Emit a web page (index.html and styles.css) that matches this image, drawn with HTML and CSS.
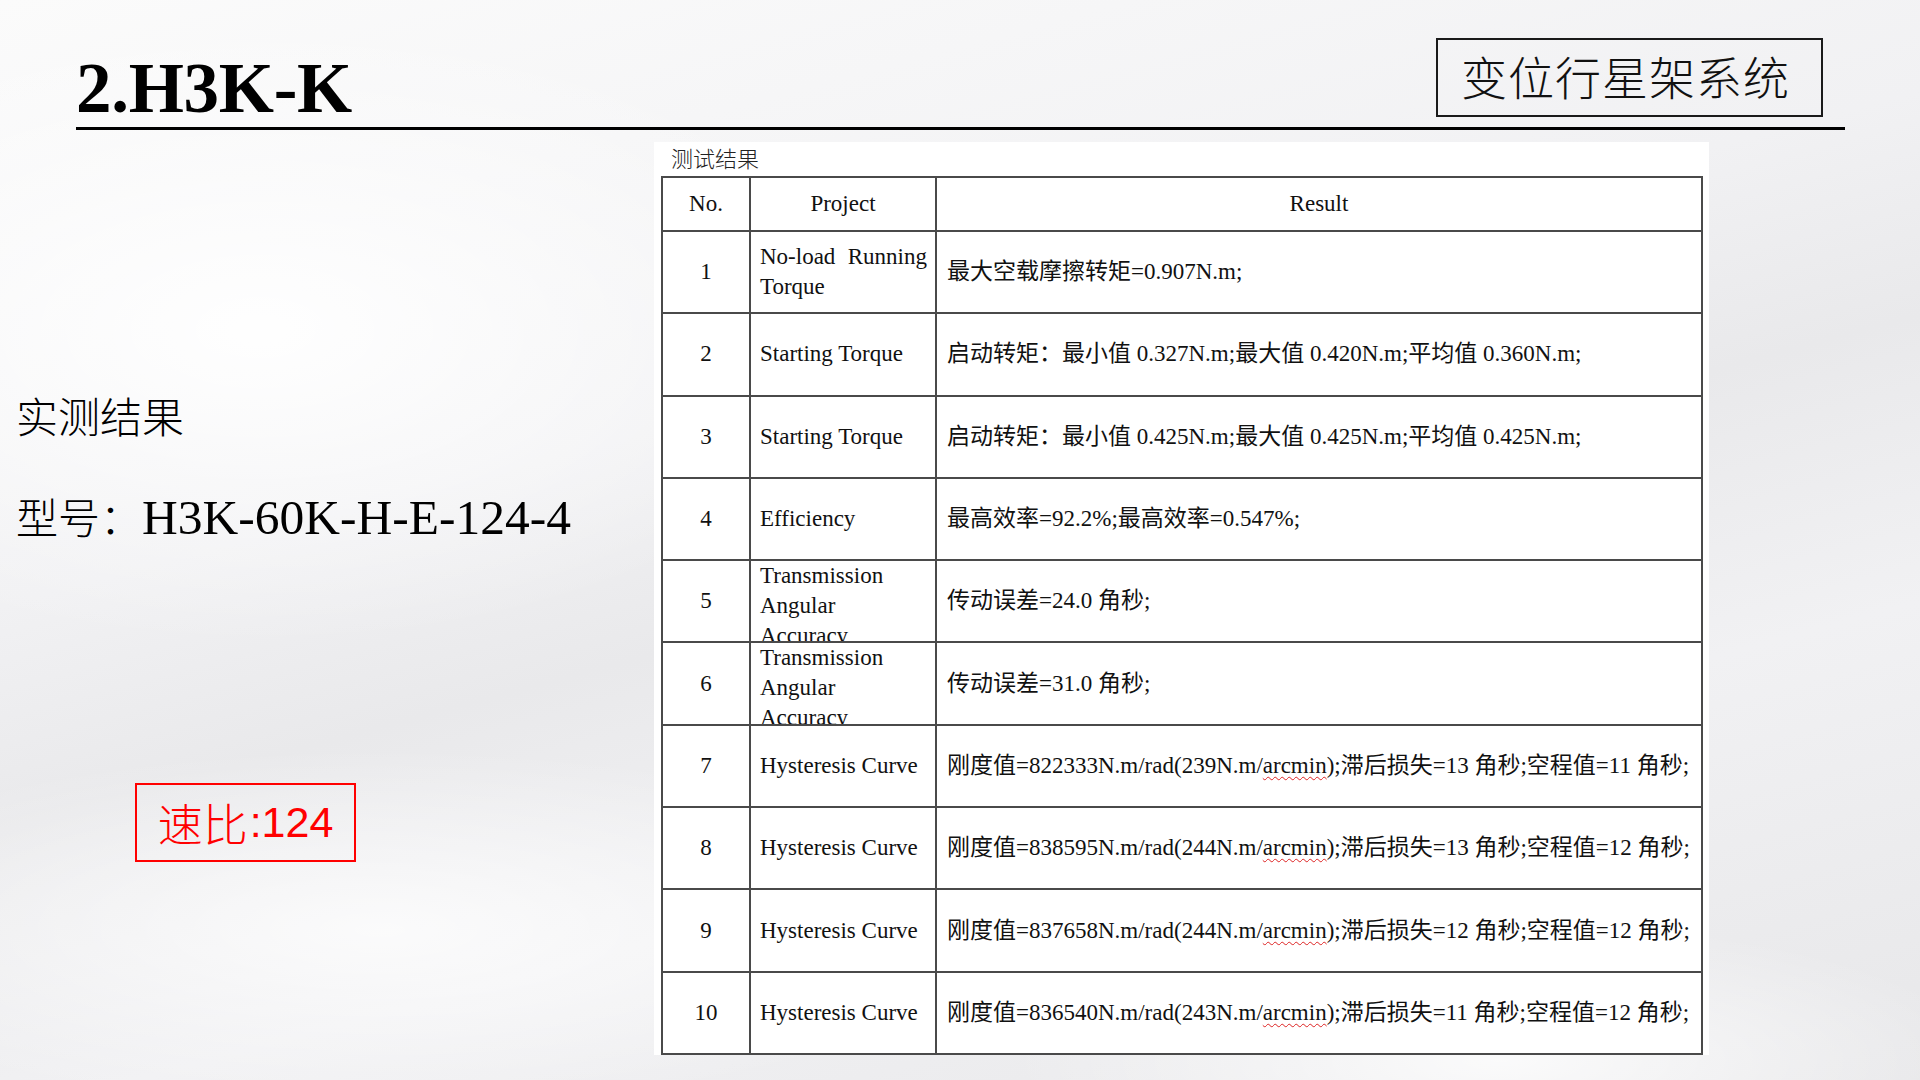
FILE: index.html
```html
<!DOCTYPE html>
<html lang="zh-CN">
<head>
<meta charset="utf-8">
<title>2.H3K-K</title>
<link rel="stylesheet" href="styles.css">
</head>
<body>
<div class="slide">
  <header class="head">
    <h1 class="title">2.H3K-K</h1>
    <div class="tag">变位行星架系统</div>
  </header>
  <main class="main">
    <section class="side">
      <div class="side-title">实测结果</div>
      <div class="model">型号：<span class="model-code">H3K-60K-H-E-124-4</span></div>
      <div class="ratio">速比<span class="ratio-num">:124</span></div>
    </section>
    <section class="panel">
      <div class="caption">测试结果</div>
      <div class="grid">
        <div class="cell head-cell">No.</div>
        <div class="cell head-cell">Project</div>
        <div class="cell head-cell">Result</div>

        <div class="cell num">1</div>
        <div class="cell proj">No-load Running Torque</div>
        <div class="cell res">最大空载摩擦转矩=0.907N.m;</div>

        <div class="cell num">2</div>
        <div class="cell proj">Starting Torque</div>
        <div class="cell res">启动转矩：最小值 0.327N.m;最大值 0.420N.m;平均值 0.360N.m;</div>

        <div class="cell num">3</div>
        <div class="cell proj">Starting Torque</div>
        <div class="cell res">启动转矩：最小值 0.425N.m;最大值 0.425N.m;平均值 0.425N.m;</div>

        <div class="cell num">4</div>
        <div class="cell proj">Efficiency</div>
        <div class="cell res">最高效率=92.2%;最高效率=0.547%;</div>

        <div class="cell num">5</div>
        <div class="cell proj proj-top">Transmission Angular Accuracy</div>
        <div class="cell res">传动误差=24.0 角秒;</div>

        <div class="cell num">6</div>
        <div class="cell proj proj-top">Transmission Angular Accuracy</div>
        <div class="cell res">传动误差=31.0 角秒;</div>

        <div class="cell num">7</div>
        <div class="cell proj">Hysteresis Curve</div>
        <div class="cell res">刚度值=822333N.m/rad(239N.m/<span class="spell">arcmin</span>);滞后损失=13 角秒;空程值=11 角秒;</div>

        <div class="cell num">8</div>
        <div class="cell proj">Hysteresis Curve</div>
        <div class="cell res">刚度值=838595N.m/rad(244N.m/<span class="spell">arcmin</span>);滞后损失=13 角秒;空程值=12 角秒;</div>

        <div class="cell num">9</div>
        <div class="cell proj">Hysteresis Curve</div>
        <div class="cell res">刚度值=837658N.m/rad(244N.m/<span class="spell">arcmin</span>);滞后损失=12 角秒;空程值=12 角秒;</div>

        <div class="cell num">10</div>
        <div class="cell proj">Hysteresis Curve</div>
        <div class="cell res">刚度值=836540N.m/rad(243N.m/<span class="spell">arcmin</span>);滞后损失=11 角秒;空程值=12 角秒;</div>
      </div>
    </section>
  </main>
</div>
</body>
</html>
```

FILE: styles.css
```css
* { box-sizing: border-box; }

html, body {
  margin: 0;
  padding: 0;
}

body {
  width: 1920px;
  height: 1080px;
  overflow: hidden;
  font-family: "Liberation Serif", "Noto Sans CJK SC", serif;
  color: #000;
  background:
    radial-gradient(ellipse 820px 420px at 260px 330px, rgba(255,255,255,0.95), rgba(255,255,255,0) 75%),
    radial-gradient(ellipse 900px 260px at 380px 930px, rgba(255,255,255,0.75), rgba(255,255,255,0) 70%),
    radial-gradient(ellipse 700px 200px at 1500px 1060px, rgba(255,255,255,0.8), rgba(255,255,255,0) 70%),
    linear-gradient(165deg, #fbfbfb 0%, #f1f1f3 38%, #e9e9eb 52%, #f1f1f3 70%, #e7e7e9 100%);
}

.slide {
  width: 1920px;
  height: 1080px;
  display: flex;
  flex-direction: column;
}

/* header */
.head {
  margin: 38px 0 0 76px;
  width: 1769px;
  display: flex;
  justify-content: space-between;
  align-items: flex-end;
  padding-right: 22px;
  border-bottom: 3px solid #000;
}

.title {
  margin: 0 0 3px 0;
  font-family: "Liberation Serif", serif;
  font-weight: 700;
  font-size: 71px;
  line-height: 72px;
  letter-spacing: -0.3px;
}

.tag {
  width: 387px;
  height: 79px;
  margin-bottom: 10px;
  border: 2px solid #1a1a1a;
  display: flex;
  align-items: center;
  justify-content: center;
  padding: 0 8px 6px 0;
  font-family: "Noto Sans CJK SC", sans-serif;
  font-weight: 300;
  font-size: 46px;
  letter-spacing: 1px;
  color: #111;
}

/* main */
.main {
  display: flex;
  padding-top: 12px;
}

.side {
  width: 654px;
  padding-left: 16px;
  display: flex;
  flex-direction: column;
  align-items: flex-start;
}

.side-title {
  margin-top: 248px;
  font-family: "Noto Sans CJK SC", sans-serif;
  font-weight: 300;
  font-size: 42px;
  line-height: 50px;
}

.model {
  margin-top: 48px;
  font-family: "Noto Sans CJK SC", sans-serif;
  font-weight: 300;
  font-size: 42px;
  line-height: 56px;
}

.model-code {
  font-family: "Liberation Serif", serif;
  font-weight: 400;
  font-size: 49.5px;
}

.ratio {
  margin: 237px 0 0 119px;
  width: 221px;
  height: 79px;
  border: 2px solid #ff0000;
  display: flex;
  align-items: center;
  justify-content: center;
  color: #ff0000;
  font-family: "Noto Sans CJK SC", sans-serif;
  font-weight: 300;
  font-size: 45px;
  line-height: 1;
}

.ratio-num {
  font-family: "Liberation Sans", sans-serif;
  font-size: 43px;
  margin-left: 2px;
}

/* table panel */
.panel {
  width: 1055px;
  height: 913px;
  background: #fff;
  padding: 4px 0 0 7px;
}

.caption {
  height: 30px;
  padding-left: 10px;
  font-family: "Noto Sans CJK SC", sans-serif;
  font-weight: 300;
  font-size: 22px;
  line-height: 23px;
  color: #222;
}

.grid {
  width: 1042px;
  display: grid;
  grid-template-columns: 86px 184px 764px;
  grid-template-rows: 52px repeat(10, 80.3px);
  gap: 2px;
  padding: 2px;
  background: #4a4a4a;
  font-family: "Liberation Serif", "Noto Sans CJK SC", serif;
  font-size: 23px;
  line-height: 30px;
  color: #111;
}

.cell {
  background: #fff;
  overflow: hidden;
  display: flex;
  align-items: center;
}

.head-cell {
  justify-content: center;
}

.num {
  justify-content: center;
}

.proj {
  padding: 0 8px 0 9px;
  text-align: justify;
}

.proj-top {
  align-items: flex-start;
}

.res {
  padding-left: 10px;
  white-space: nowrap;
}

.spell {
  text-decoration: underline wavy #d22;
  text-decoration-thickness: 1px;
  text-underline-offset: 3px;
}
```
